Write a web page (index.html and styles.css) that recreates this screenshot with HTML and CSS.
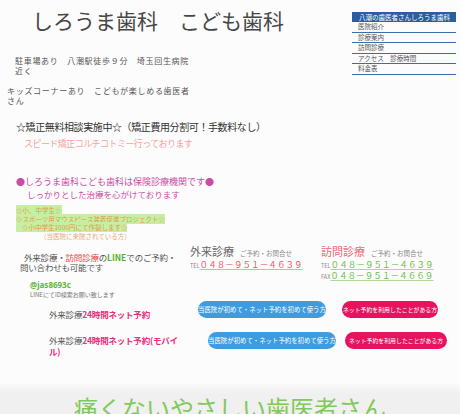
FILE: index.html
```html
<!DOCTYPE html>
<html lang="ja">
<head>
<meta charset="utf-8">
<title>しろうま歯科　こども歯科</title>
<link rel="stylesheet" href="styles.css">
</head>
<body>
<header class="top">
  <div class="lead">
    <h1 class="site-title">しろうま歯科　こども歯科</h1>
    <p class="access">駐車場あり　八潮駅徒歩９分　埼玉回生病院近く</p>
    <p class="kids">キッズコーナーあり　こどもが楽しめる歯医者さん</p>
  </div>
  <nav class="side-nav">
    <div class="nav-head">八潮の歯医者さんしろうま歯科</div>
    <a class="nav-item" href="#">医院紹介</a>
    <a class="nav-item" href="#">診療案内</a>
    <a class="nav-item" href="#">訪問診療</a>
    <a class="nav-item" href="#">アクセス　診療時間</a>
    <a class="nav-item" href="#">料金表</a>
  </nav>
</header>

<section class="notices">
  <p class="ortho">☆矯正無料相談実施中☆（矯正費用分割可！手数料なし）</p>
  <p class="speed">スピード矯正コルチコトミー行っております</p>
  <div class="insurance">
    <p class="ins-main">●しろうま歯科こども歯科は保険診療機関です●</p>
    <p class="ins-sub">しっかりとした治療を心がけております</p>
  </div>
  <div class="mouthguard">
    <div class="mg-line"><span class="hl">☆小、中学生☆</span></div>
    <div class="mg-line"><span class="hl">☆スポーツ用マウスピース装着促進プロジェクト☆</span></div>
    <div class="mg-line"><span class="hl hl-pad">☆小中学生1000円にて作製します☆</span></div>
    <div class="mg-line mg-note">（当医院に来院されている方）</div>
  </div>
</section>

<section class="contact">
  <div class="contact-left">
    <p class="line-info">外来診療・<span class="c-red">訪問診療</span>の<span class="c-line">LINE</span>でのご予約・問い合わせも可能です</p>
    <p class="line-id">@jas8693c</p>
    <p class="line-note">LINEにてID検索お願い致します</p>
    <p class="net net-pc">外来診療<span class="c-net">24時間ネット予約</span></p>
    <p class="net net-mobile">外来診療<span class="c-net">24時間ネット予約(モバイル)</span></p>
  </div>
  <div class="contact-right">
    <div class="phones">
      <div class="phone-block phone-out">
        <div class="phone-title"><span class="dept dept-out">外来診療</span><span class="dept-sub">ご予約・お問合せ</span></div>
        <div class="phone-line"><span class="phone-label">TEL</span><a class="num num-red" href="#">０４８－９５１－４６３９</a></div>
      </div>
      <div class="phone-block phone-visit">
        <div class="phone-title"><span class="dept dept-visit">訪問診療</span><span class="dept-sub">ご予約・お問合せ</span></div>
        <div class="phone-line"><span class="phone-label">TEL</span><a class="num num-green" href="#">０４８－９５１－４６３９</a></div>
        <div class="phone-line"><span class="phone-label">FAX</span><a class="num num-green" href="#">０４８－９５１－４６６９</a></div>
      </div>
    </div>
    <div class="btn-row row-one">
      <a class="btn btn-blue" href="#">当医院が初めて・ネット予約を初めて使う方</a>
      <a class="btn btn-pink pink-one" href="#">ネット予約を利用したことがある方</a>
    </div>
    <div class="btn-row row-two">
      <a class="btn btn-blue" href="#">当医院が初めて・ネット予約を初めて使う方</a>
      <a class="btn btn-pink pink-two" href="#">ネット予約を利用したことがある方</a>
    </div>
  </div>
</section>

<footer class="band">
  <p class="catch">痛くないやさしい歯医者さん</p>
</footer>
</body>
</html>
```

FILE: styles.css
```css
* { box-sizing: border-box; }
html, body { margin: 0; padding: 0; }
body {
  width: 460px;
  height: 414px;
  overflow: hidden;
  background: #fcfcfc;
  color: #555;
  font-family: "Noto Sans CJK JP", "Noto Sans", sans-serif;
}
p { margin: 0; }
a { color: inherit; text-decoration: none; }

/* top */
.top {
  display: flex;
  justify-content: space-between;
  align-items: flex-start;
}
.site-title {
  margin: 0 0 0 32px;
  padding-top: 5px;
  font-size: 21px;
  line-height: 30px;
  font-weight: normal;
  color: #474747;
  white-space: nowrap;
}
.access {
  margin: 21px 0 0 15px;
  width: 182px;
  font-size: 8px;
  line-height: 10px;
  letter-spacing: 0.7px;
  color: #555;
}
.kids {
  margin: 10px 0 0 7px;
  width: 190px;
  font-size: 8px;
  line-height: 10px;
  letter-spacing: 0.7px;
  color: #555;
}
.side-nav {
  width: 104px;
  margin: 12px 4px 0 0;
  display: flex;
  flex-direction: column;
}
.nav-head {
  background: #2d5d9c;
  color: #fff;
  font-size: 6.5px;
  line-height: 10px;
  padding-left: 7px;
  white-space: nowrap;
}
.nav-item {
  display: block;
  font-size: 6.5px;
  line-height: 9.6px;
  padding-left: 6px;
  color: #555;
  border-bottom: 1px solid #3b6cae;
  white-space: nowrap;
}

/* notices */
.ortho {
  margin: 14px 0 0 16px;
  font-size: 10px;
  line-height: 14px;
  letter-spacing: -0.4px;
  color: #333;
  white-space: nowrap;
}
.speed {
  margin: 3.5px 0 0 24px;
  font-size: 9px;
  line-height: 12px;
  letter-spacing: -0.55px;
  color: #f5a3a3;
  white-space: nowrap;
}
.insurance {
  margin: 26.5px 0 0 16px;
  color: #c94ca6;
  white-space: nowrap;
}
.ins-main {
  font-size: 9px;
  line-height: 12px;
}
.ins-sub {
  padding-left: 11px;
  font-size: 8.5px;
  line-height: 12px;
}
.mouthguard {
  margin: 6px 0 0 0;
  font-size: 6.5px;
  line-height: 8.7px;
  color: #e09a48;
  white-space: nowrap;
}
.mg-line { padding-left: 16px; }
.hl { background: #c6efa3; }
.hl-pad { padding-left: 6px; }
.mg-note { padding-left: 40px; color: #eaa87a; }

/* contact */
.contact { display: flex; }
.contact-left { width: 190px; }
.line-info {
  margin: 11px 0 0 20px;
  width: 160px;
  text-indent: 4px;
  font-size: 8.5px;
  line-height: 10px;
  letter-spacing: -0.2px;
  color: #555;
}
.c-red { color: #ee4b4b; }
.c-line { color: #55b52a; font-weight: bold; letter-spacing: 0; }
.line-id {
  margin: 8px 0 0 30px;
  font-family: "Noto Sans", sans-serif;
  font-size: 8px;
  line-height: 10px;
  font-weight: bold;
  color: #5fb832;
}
.line-note {
  margin: 0 0 0 30px;
  font-size: 6px;
  line-height: 10px;
  color: #777;
  white-space: nowrap;
}
.net {
  margin-left: 49px;
  width: 135px;
  font-size: 8.5px;
  letter-spacing: -0.2px;
  color: #555;
}
.net-pc { margin-top: 8.5px; line-height: 12px; }
.net-mobile { margin-top: 15px; line-height: 11px; }
.c-net { color: #e8327e; font-weight: bold; }

.contact-right { flex: 1; }
.phones { display: flex; margin-top: 3.5px; }
.phone-block { display: flex; flex-direction: column; }
.phone-out { width: 131px; }
.phone-title { line-height: 14px; font-size: 11px; white-space: nowrap; }
.dept { font-size: 11px; }
.dept-out { color: #666; }
.dept-visit { color: #f06a78; }
.dept-sub { margin-left: 6px; font-size: 6.5px; color: #888; }
.phone-line {
  font-size: 8.6px;
  line-height: 9px;
  white-space: nowrap;
}
.phone-label { font-size: 5.5px; color: #888; }
.num { text-decoration: underline; text-underline-offset: 1px; }
.num-red { color: #f2576a; text-decoration-color: #f7a3ad; }
.num-green { color: #6cc04a; text-decoration-color: #a9de92; }

.btn-row { display: flex; }
.row-one { margin-top: 18.5px; padding-left: 8px; }
.row-two { margin-top: 14px; padding-left: 18px; }
.btn {
  display: block;
  height: 17px;
  line-height: 17px;
  border-radius: 9px;
  color: #fff;
  text-align: center;
  white-space: nowrap;
}
.btn-blue {
  width: 128px;
  background: #3d9be0;
  font-size: 6.4px;
}
.btn-pink {
  background: #e8135f;
  font-size: 5.9px;
}
.pink-one { width: 96px; margin-left: 16px; }
.pink-two { width: 102px; margin-left: 9px; }

/* band */
.band {
  margin-top: 27px;
  padding-top: 8.5px;
  height: 30px;
  overflow: hidden;
  background: linear-gradient(#f9f9f9, #f0f0f0 10px);
}
.catch {
  text-align: center;
  font-size: 24px;
  line-height: 30px;
  color: #80c95a;
  white-space: nowrap;
}
```
